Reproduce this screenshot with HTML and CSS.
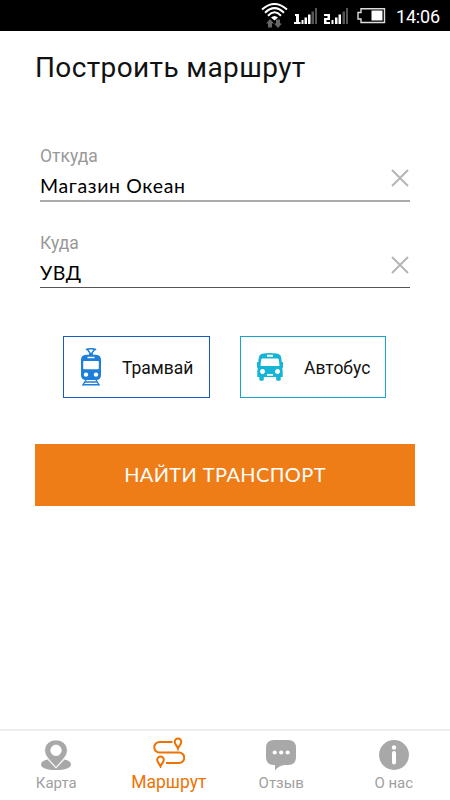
FILE: index.html
```
<!DOCTYPE html>
<html lang="ru">
<head>
  <meta charset="UTF-8">
  <meta name="viewport" content="width=device-width, initial-scale=1.0">
  <title>Построить маршрут</title>
  <link rel="stylesheet" href="styles.css">
</head>
<body>
  <!-- Status bar -->
  <div class="status-bar">
    <svg class="wifi" width="27" height="26" viewBox="0 0 27 26">
      <g fill="none" stroke="#fff" stroke-width="2">
        <path d="M1 6.500Q13.500 -4.500 26 6.500"/>
        <path d="M4 9.700Q13.500 .5 23 9.700"/>
        <path d="M7 12.700Q13.500 6 20 12.700"/>
      </g>
      <path d="M10 14.500Q13.500 11.500 17 14.500L13.500 17.500z" fill="#fff"/>
      <path d="M9 16l4 4.500h-2v4H7v-4H5zM17 25l-4-4.500h2v-4h4v4h2z" fill="#666"/>
    </svg>
    <svg class="signal" width="24" height="17" viewBox="0 0 24 17">
      <path d="M1 6h4v8h1.500v2H0v-2h2V8H1zM7.500 12h2v4h-2zM10.500 9.500H13V16h-2.500zM14 6.500h2.500V16H14z" fill="#fff"/>
      <path d="M17.500 3.500H20V16h-2.500zM21 0h2v16h-2z" fill="#555"/>
    </svg>
    <svg class="signal" width="25" height="17" viewBox="0 0 25 17">
      <path d="M0 6h6v6H2.500v2H6v2H0v-6h3.500V8H0zM7.500 12h2v4h-2zM11 9.500h2.500V16H11zM14.500 6.500H17V16h-2.500z" fill="#fff"/>
      <path d="M18.500 3.500H21V16h-2.500zM22 0h2v16h-2z" fill="#555"/>
    </svg>
    <svg class="battery" width="29" height="16" viewBox="0 0 29 16">
      <path d="M4 .7H27.500V14.500H4V11H1V4.500H4z" fill="none" stroke="#ddd" stroke-width="1.400"/>
      <path d="M14.500 2.500h11v10h-11z" fill="#fff"/>
    </svg>
    <span class="clock">14:06</span>
  </div>

  <main class="content">
    <h1>Построить маршрут</h1>

    <div class="field">
      <div class="field-text">
        <div class="label">Откуда</div>
        <div class="value value-from">Магазин Океан</div>
      </div>
      <svg class="clear" width="18" height="18" viewBox="0 0 18 18"><path d="M1 1l16 16M17 1L1 17"/></svg>
    </div>
    <div class="field field-to">
      <div class="field-text">
        <div class="label">Куда</div>
        <div class="value value-to">УВД</div>
      </div>
      <svg class="clear" width="18" height="18" viewBox="0 0 18 18"><path d="M1 1l16 16M17 1L1 17"/></svg>
    </div>

    <div class="types">
      <div class="type tram">
        <svg width="22" height="40" viewBox="0 0 22 40">
          <path d="M6 3Q7 1.800 11 1.800T16 3M7.500 2.500l3.500 5L14.500 2.500" fill="none" stroke="#1e7fdb" stroke-width="1.400"/>
          <path fill="#1e7fdb" fill-rule="evenodd" d="M9 6.500h4v1.200h3Q21 8 21 13v15q0 5-5 5H6q-5 0-5-5V13Q1 8 6 7.700h3zM7.500 9.700v1.500h7V9.700zM4 14q-.8 0-.8.8V21.500q0 .8.800.8h14q.8 0 .8-.8V14.800q0-.8-.8-.8zM6 25.400a2.200 2.200 0 1 0 .01 0zM16 25.400a2.200 2.200 0 1 0 .01 0z"/>
          <path d="M6 33L2.500 38.700M16 33l3.500 5.700M5 35h12M3.500 37.800h15" fill="none" stroke="#1e7fdb" stroke-width="1.400"/>
        </svg>
        <span>Трамвай</span>
      </div>
      <div class="type bus">
        <svg width="28" height="30" viewBox="0 0 28 30">
          <path fill="#16b4d6" fill-rule="evenodd" d="M14 1q8.500 0 10.300 2.200Q25.400 4.500 25.700 10h.8q.5 0 .5 1v4q0 1-.8 1l.5 3v6H24.700v2.500q0 1.300-1.500 1.300h-1.500q-1.500 0-1.500-1.300V25H7.800v2.500q0 1.300-1.500 1.300H4.800q-1.500 0-1.500-1.300V25H1.300v-6l.5-3Q1 16 1 15v-4q0-1 .5-1h.8q.3-5.500 1.400-6.800Q5.500 1 14 1zM11 2.800v2h6v-2zM6.500 6.500q-1 0-1.200 1L4.500 13q-.2 1 .8 1h17.400q1 0 .8-1l-.8-5.500q-.2-1-1.200-1zM6.500 17a2.500 2.500 0 1 0 .01 0zM21.500 17a2.500 2.500 0 1 0 .01 0zM11 22v1.700h6V22z"/>
        </svg>
        <span>Автобус</span>
      </div>
    </div>

    <button class="submit-btn">НАЙТИ ТРАНСПОРТ</button>
  </main>

  <!-- Bottom tabs -->
  <nav class="tabs">
    <div class="tab">
      <svg width="32" height="32" viewBox="0 0 32 32">
        <path d="M7.500 20.500Q1 22 1 25.500C1 29 7 31 16 31s15-2 15-5.500q0-3.500-6.500-5L16 29.500z" fill="#a8a8a8"/>
        <path fill="#a8a8a8" fill-rule="evenodd" stroke="#fff" stroke-width=".7" d="M16 1c6.500 0 11.300 4.500 11.300 10.500C27.300 18 20 23 16 28.500 12 23 4.700 18 4.700 11.500 4.700 5.500 9.500 1 16 1zM16 6a5.300 5.300 0 1 0 .01 0z"/>
      </svg>
      <span>Карта</span>
    </div>
    <div class="tab active">
      <svg width="32" height="32" viewBox="0 0 32 32">
        <g fill="none" stroke="#ee7203" stroke-width="2">
          <path d="M19.500 6H6.500a5 5 0 0 0 0 10.500H26a5 5 0 0 1 0 10.500H13"/>
          <path d="M25 2.500a3.300 3.300 0 0 1 3.300 3.300C28.300 8.500 26 9.500 25 12.500 24 9.500 21.700 8.500 21.700 5.800A3.300 3.300 0 0 1 25 2.500zM7.500 20.500a3.300 3.300 0 0 1 3.300 3.300c0 2.700-2.300 3.700-3.300 6.700-1-3-3.300-4-3.300-6.700a3.300 3.300 0 0 1 3.300-3.300z"/>
        </g>
      </svg>
      <span>Маршрут</span>
    </div>
    <div class="tab">
      <svg width="32" height="32" viewBox="0 0 32 32">
        <path d="M9 1h14q8 0 8 8v9q0 8-8 8h-3q-6 .5-10 5.300V26H9q-8 0-8-8V9q0-8 8-8z" fill="#a8a8a8"/>
        <g fill="#fff"><circle cx="9.700" cy="13.500" r="2.100"/><circle cx="16.200" cy="13.500" r="2.100"/><circle cx="22.700" cy="13.500" r="2.100"/></g>
      </svg>
      <span>Отзыв</span>
    </div>
    <div class="tab">
      <svg width="32" height="32" viewBox="0 0 32 32">
        <circle cx="16" cy="16" r="15" fill="#a8a8a8"/>
        <circle cx="16" cy="8.500" r="2.200" fill="#fff"/>
        <rect x="14" y="12" width="4" height="13.500" rx="2" fill="#fff"/>
      </svg>
      <span>О нас</span>
    </div>
  </nav>
</body>
</html>
```
FILE: styles.css
```
* {
  box-sizing: border-box;
}
body {
  margin: 0;
  height: 100vh;
  display: flex;
  flex-direction: column;
  overflow: hidden;
  background: #fff;
  color: #111;
  font-family: Roboto, "Noto Sans", sans-serif;
}
svg {
  display: block;
  flex-shrink: 0;
}
.status-bar {
  height: 31px;
  flex-shrink: 0;
  background: #000;
  color: #fff;
  display: flex;
  justify-content: flex-end;
  padding: 3px 10px 0 0;
}
.signal {
  margin-top: 5px;
  margin-left: 6px;
}
.battery {
  margin: 5px 10px 0 8px;
}
.clock {
  width: 44px;
  font-size: 18px;
  line-height: 27px;
  letter-spacing: -0.2px;
  white-space: nowrap;
}
.content {
  flex: 1;
  padding: 17px 35px 0;
}
h1 {
  margin: 0 0 58px;
  font-size: 28px;
  font-weight: 400;
  line-height: 40px;
  letter-spacing: 0.38px;
}
.field {
  height: 56px;
  margin: 0 5px;
  display: flex;
  justify-content: space-between;
  border-bottom: 2px solid #aaa;
}
.field-to {
  height: 55px;
  margin-top: 31px;
  border-bottom: 1px solid #555;
}
.label {
  color: #999;
  font-size: 17.5px;
  line-height: 20px;
}
.value {
  margin-top: 7px;
  color: #000;
  font-family: Lato, "Noto Sans", sans-serif;
  font-size: 19.5px;
  line-height: 26px;
}
.value-from {
  letter-spacing: 0.65px;
}
.value-to {
  letter-spacing: 0.5px;
}
.clear {
  margin: 23px 1px 0 0;
  stroke: #b5b5b5;
  stroke-width: 2;
}
.types {
  display: flex;
  gap: 30px;
  margin: 48px 29px 0 28px;
}
.type {
  width: 147px;
  height: 62px;
  display: flex;
  align-items: center;
  border: 1px solid #1558c8;
  font-size: 17.5px;
}
.type span {
  padding-top: 2px;
}
.tram svg {
  margin: 0 20px 0 16px;
}
.bus {
  width: 146px;
  border-color: #16a4cc;
}
.bus svg {
  margin: 0 20px 0 15px;
}
.submit-btn {
  display: block;
  width: 100%;
  height: 62px;
  margin-top: 46px;
  border: none;
  padding: 0 0 3px;
  background: #ef7d17;
  color: #fff;
  font-family: Lato, "Noto Sans", sans-serif;
  font-size: 20px;
  letter-spacing: 0.4px;
}
.tabs {
  height: 71px;
  flex-shrink: 0;
  display: flex;
  border-top: 2px solid #eee;
}
.tab {
  flex: 1;
  display: flex;
  flex-direction: column;
  align-items: center;
  padding-top: 8px;
  color: #a0a0a0;
  font-size: 15px;
}
.tab span {
  margin-top: 1px;
  line-height: 22px;
}
.active {
  padding-top: 5px;
  color: #ee7203;
  font-size: 17.5px;
}
.tab.active span {
  margin-top: 3px;
}
```
